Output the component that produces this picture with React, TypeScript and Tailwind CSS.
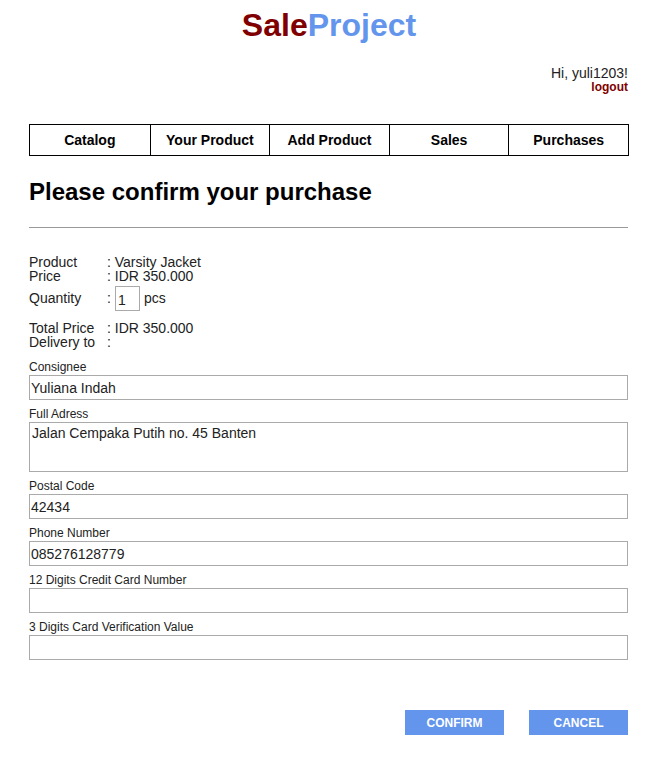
const navItems = ['Catalog', 'Your Product', 'Add Product', 'Sales', 'Purchases'];

const fields = [
  { label: 'Consignee', value: 'Yuliana Indah' },
  { label: 'Full Adress', value: 'Jalan Cempaka Putih no. 45 Banten', area: true },
  { label: 'Postal Code', value: '42434' },
  { label: 'Phone Number', value: '085276128779' },
  { label: '12 Digits Credit Card Number', value: '' },
  { label: '3 Digits Card Verification Value', value: '' },
];

function InfoRow({ label, value }: { label: string; value: string }) {
  return (
    <div className="flex h-[14px] items-center leading-[14px]">
      <span className="w-[78px]">{label}</span>
      <span>: {value}</span>
    </div>
  );
}

export default function App() {
  return (
    <div className="min-h-[761px] bg-white font-['Liberation_Sans',Arial,sans-serif] text-[#222]">
      <div className="ml-[29px] w-[600px]">
        <h1 className="pt-[7px] text-center text-[32px] font-bold leading-[37px]">
          <span className="text-[#800000]">Sale</span>
          <span className="text-[#6495ed]">Project</span>
        </h1>

        <div className="mt-[22px] pr-[1px] text-right">
          <div className="text-[14px] leading-[14px]">Hi, yuli1203!</div>
          <div className="text-[12px] font-bold leading-[14px] text-[#800000]">logout</div>
        </div>

        <nav className="mt-[30px] grid h-[32px] grid-cols-5 border border-black">
          {navItems.map((item, i) => (
            <div
              key={item}
              className={`flex items-center justify-center text-[14px] font-bold text-black ${i > 0 ? 'border-l border-black' : ''}`}
            >
              {item}
            </div>
          ))}
        </nav>

        <h2 className="mt-[22px] text-[24px] font-bold leading-[28px] text-black">Please confirm your purchase</h2>
        <hr className="mt-[21px] mr-[1px] border-t border-[#999]" />

        <div className="mt-[27px] text-[14px]">
          <InfoRow label="Product" value="Varsity Jacket" />
          <InfoRow label="Price" value="IDR 350.000" />
          <div className="mt-[3px] flex h-[25px] items-center">
            <span className="w-[78px]">Quantity</span>
            <span>:</span>
            <input
              defaultValue="1"
              className="ml-[4px] h-[25px] w-[25px] border border-[#aaa] px-[2px] pt-[3px] text-[14px] outline-none"
            />
            <span className="ml-[4px]">pcs</span>
          </div>
          <div className="mt-[10px]">
            <InfoRow label="Total Price" value="IDR 350.000" />
            <InfoRow label="Delivery to" value="" />
          </div>
        </div>

        <div className="mt-[11px] flex flex-col">
          {fields.map((f) => (
            <div key={f.label} className="mb-[7px] flex flex-col">
              <label className="h-[15px] text-[12px] leading-[14px]">{f.label}</label>
              {f.area ? (
                <textarea
                  defaultValue={f.value}
                  className="mr-[1px] h-[50px] resize-none border border-[#aaa] px-[2px] py-[1px] text-[14px] leading-[18px] text-[#222] outline-none"
                />
              ) : (
                <input
                  defaultValue={f.value}
                  className="mr-[1px] h-[25px] border border-[#aaa] px-[1px] text-[14px] text-[#222] outline-none"
                />
              )}
            </div>
          ))}
        </div>

        <div className="mt-[43px] flex justify-end gap-[25px] pr-[1px]">
          <button className="h-[25px] w-[99px] bg-[#6495ed] text-[12px] font-bold text-white">CONFIRM</button>
          <button className="h-[25px] w-[99px] bg-[#6495ed] text-[12px] font-bold text-white">CANCEL</button>
        </div>
      </div>
    </div>
  );
}
